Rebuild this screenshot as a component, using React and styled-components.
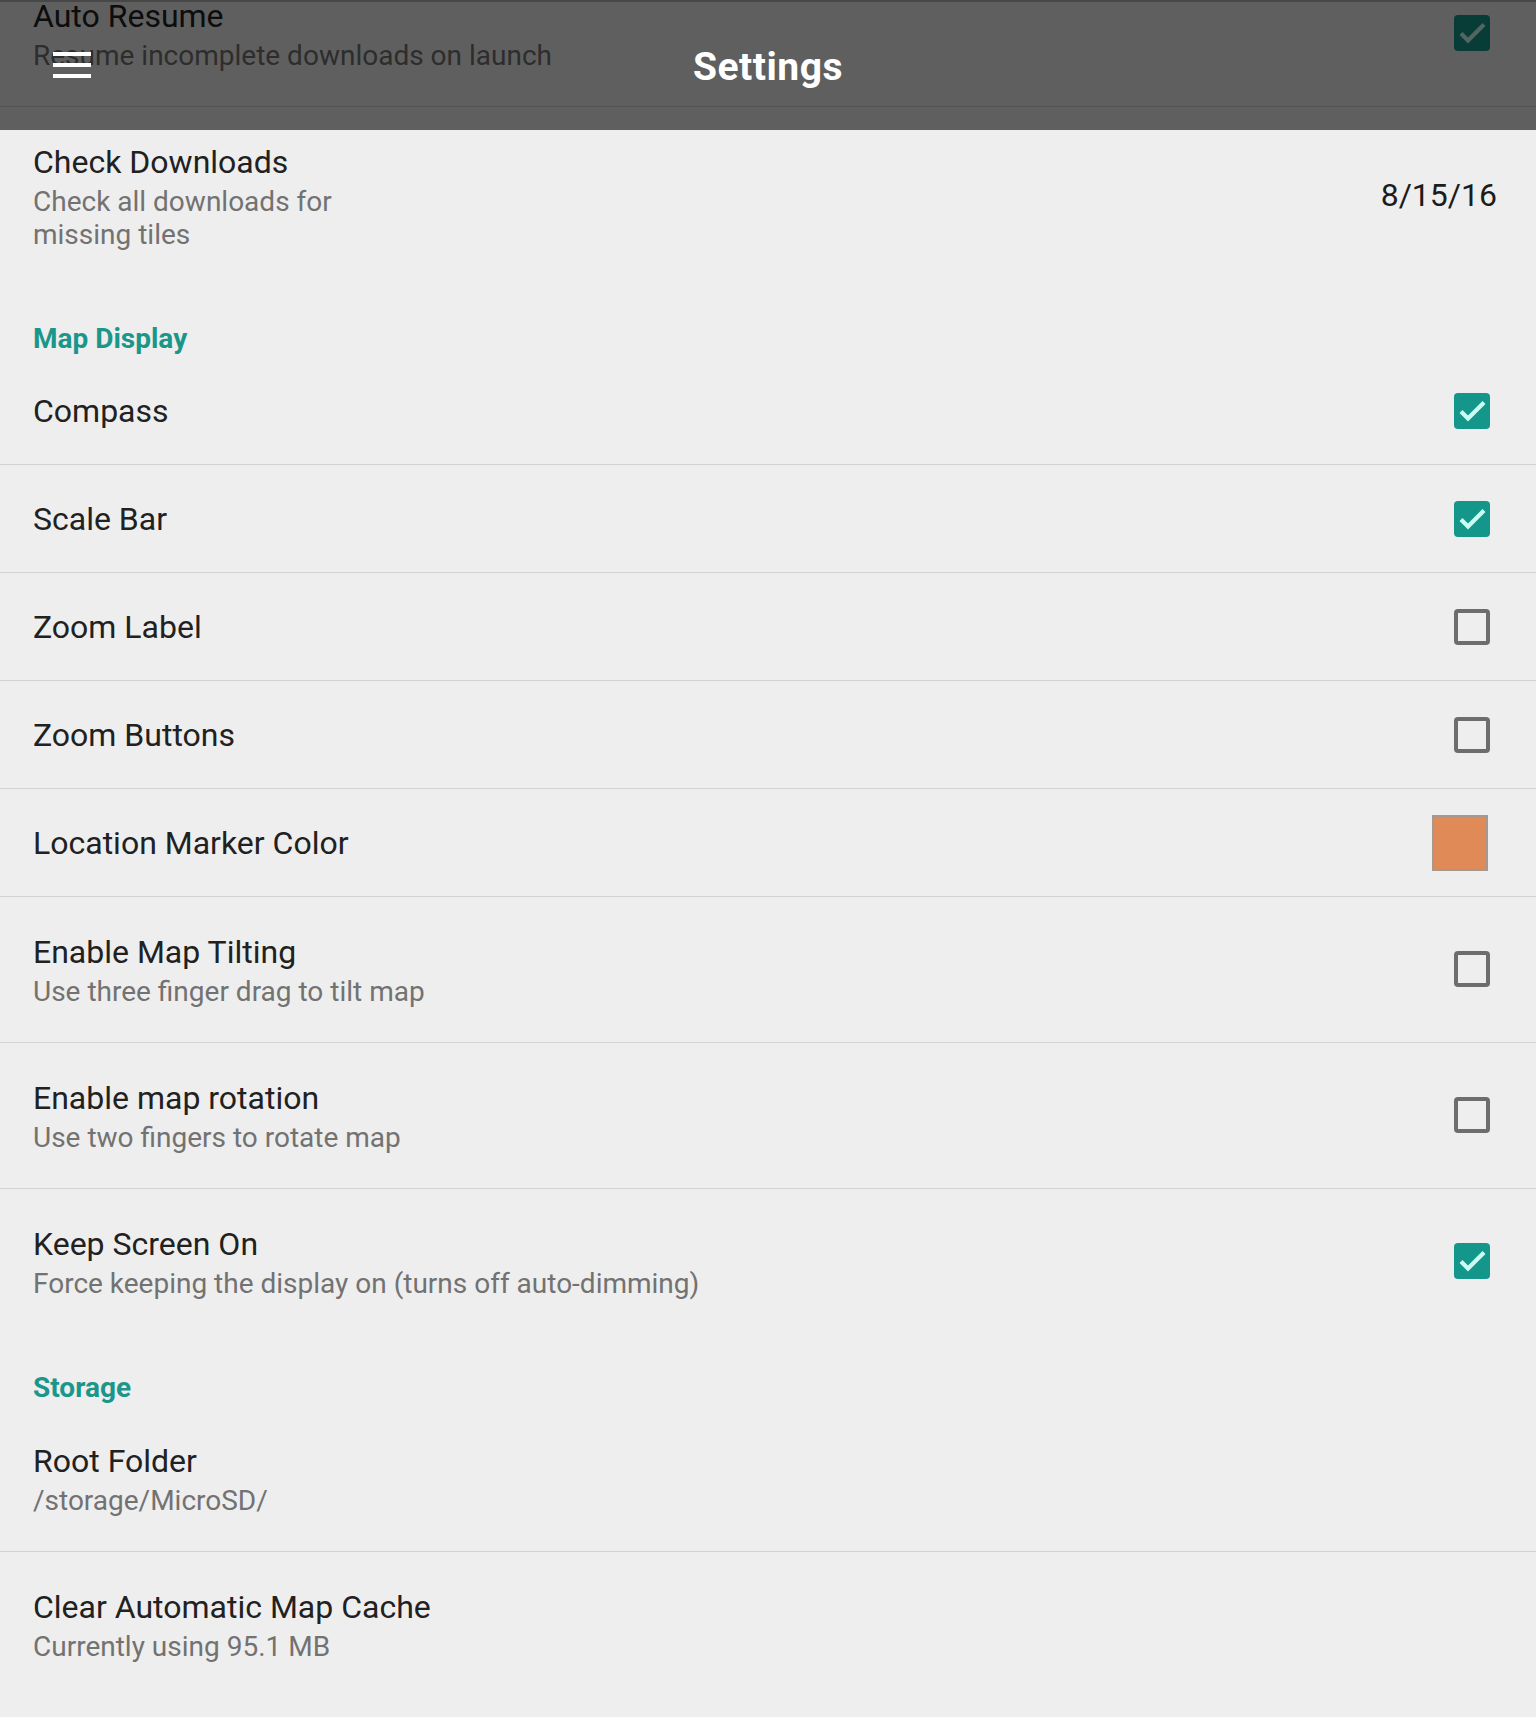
import React from 'react';
import styled, { createGlobalStyle } from 'styled-components';

const GlobalStyle = createGlobalStyle`
  html, body {
    margin: 0;
    padding: 0;
    background: #eeeeee;
  }
  body {
    font-family: Roboto, "Noto Sans", "Liberation Sans", sans-serif;
    -webkit-font-smoothing: antialiased;
  }
`;

const Screen = styled.div`
  position: relative;
  width: 1536px;
  height: 1717px;
  overflow: hidden;
  background: #eeeeee;
`;

const List = styled.div`
  display: flex;
  flex-direction: column;
  margin-top: -39px;
`;

const Row = styled.div`
  display: flex;
  align-items: center;
  justify-content: space-between;
  box-sizing: border-box;
  min-height: ${(p) => (p.single ? '108px' : 'auto')};
  padding: ${(p) => (p.single ? '0 39px 0 33px' : '32px 39px 34px 33px')};
  border-bottom: 1px solid ${(p) => (p.divider ? '#d3d3d3' : 'transparent')};
`;

const Texts = styled.div`
  display: flex;
  flex-direction: column;
`;

const Title = styled.div`
  font-size: 32px;
  line-height: 46px;
  color: #212121;
`;

const Summary = styled.div`
  font-size: 28px;
  line-height: 33px;
  color: #727272;
  max-width: ${(p) => p.maxWidth || 'none'};
`;

const Category = styled.div`
  padding: 36px 33px 2px;
  font-size: 28px;
  line-height: 33px;
  font-weight: 700;
  color: #1b968a;
`;

const Value = styled.div`
  font-size: 32px;
  line-height: 40px;
  color: #1c1c1c;
`;

const Box = styled.div`
  box-sizing: border-box;
  width: 36px;
  height: 36px;
  margin-right: 7px;
  border-radius: 4px;
  display: flex;
  align-items: center;
  justify-content: center;
  background: ${(p) => (p.checked ? '#15968a' : 'transparent')};
  border: ${(p) => (p.checked ? 'none' : '4px solid #6d6d6d')};
`;

const Swatch = styled.div`
  box-sizing: border-box;
  width: 56px;
  height: 56px;
  margin-right: 9px;
  background: ${(p) => p.color};
  border: 2px solid #a59890;
`;

const Toolbar = styled.header`
  position: absolute;
  top: 0;
  left: 0;
  right: 0;
  height: 130px;
  background: rgba(0, 0, 0, 0.6);
  box-shadow: inset 0 2px 0 rgba(0, 0, 0, 0.25);
  display: flex;
  align-items: center;
  justify-content: center;
`;

const MenuButton = styled.div`
  position: absolute;
  left: 53px;
  top: 52px;
  width: 38px;
  height: 26px;
  display: flex;
  flex-direction: column;
  justify-content: space-between;
`;

const MenuBar = styled.span`
  display: block;
  height: 4px;
  background: #ffffff;
`;

const ToolbarTitle = styled.h1`
  margin: 4px 0 0;
  font-size: 39px;
  letter-spacing: 0.5px;
  font-weight: 700;
  color: #ffffff;
`;

function Check({ checked }) {
  return (
    <Box checked={checked}>
      {checked && (
        <svg width="36" height="36" viewBox="0 0 36 36">
          <path d="M7 18.5 L14 25.5 L30 9.5" fill="none" stroke="#cbfcf4" strokeWidth="4.2" />
        </svg>
      )}
    </Box>
  );
}

function Pref({ title, summary, widget, divider, summaryWidth }) {
  return (
    <Row single={!summary} divider={divider}>
      <Texts>
        <Title>{title}</Title>
        {summary && <Summary maxWidth={summaryWidth}>{summary}</Summary>}
      </Texts>
      {widget}
    </Row>
  );
}

export default function App() {
  return (
    <Screen>
      <GlobalStyle />
      <List>
        <Pref
          title="Auto Resume"
          summary="Resume incomplete downloads on launch"
          widget={<Check checked />}
          divider
        />
        <Pref
          title="Check Downloads"
          summary="Check all downloads for missing tiles"
          summaryWidth="330px"
          widget={<Value>8/15/16</Value>}
        />
        <Category>Map Display</Category>
        <Pref title="Compass" widget={<Check checked />} divider />
        <Pref title="Scale Bar" widget={<Check checked />} divider />
        <Pref title="Zoom Label" widget={<Check />} divider />
        <Pref title="Zoom Buttons" widget={<Check />} divider />
        <Pref title="Location Marker Color" widget={<Swatch color="#e08a58" />} divider />
        <Pref
          title="Enable Map Tilting"
          summary="Use three finger drag to tilt map"
          widget={<Check />}
          divider
        />
        <Pref
          title="Enable map rotation"
          summary="Use two fingers to rotate map"
          widget={<Check />}
          divider
        />
        <Pref
          title="Keep Screen On"
          summary="Force keeping the display on (turns off auto-dimming)"
          widget={<Check checked />}
        />
        <Category>Storage</Category>
        <Pref title="Root Folder" summary="/storage/MicroSD/" divider />
        <Pref title="Clear Automatic Map Cache" summary="Currently using 95.1 MB" />
      </List>
      <Toolbar>
        <MenuButton>
          <MenuBar />
          <MenuBar />
          <MenuBar />
        </MenuButton>
        <ToolbarTitle>Settings</ToolbarTitle>
      </Toolbar>
    </Screen>
  );
}
